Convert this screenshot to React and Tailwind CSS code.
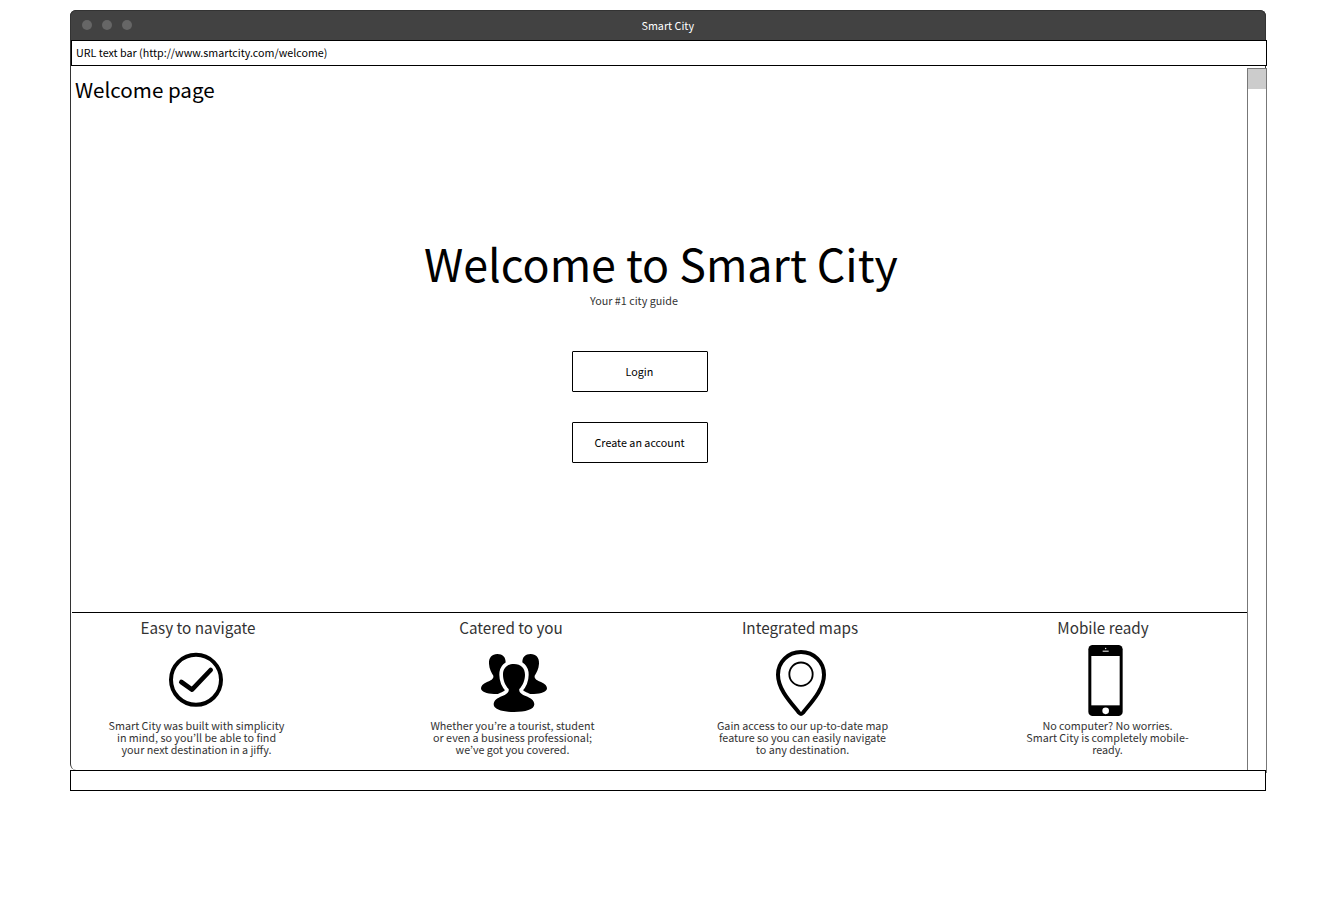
import React from "react";

function CheckIcon() {
  return (
    <svg className="h-[72px] w-[80px]" viewBox="198 120 240 216" fill="none" stroke="#000">
      <circle cx="318" cy="224.5" r="75" strokeWidth="12" />
      <path d="M274 231L306 254L362 195" strokeWidth="14" strokeLinecap="round" strokeLinejoin="round" />
    </svg>
  );
}

function PeopleIcon() {
  const side =
    "M232 147C216 147 206 158 207 176C208 192 214 202 220 212C222 222 211 227 201 231C188 237 183 243 183 250C183 260 200 267 222 267L262 267L262 190L257 172C257 156 248 147 232 147Z";
  const front =
    "M282 177C261 177 249 190 249 209C249 226 256 241 266 252C268 263 258 268 247 273C231 279 221 287 221 298C221 314 248 321 282 321C316 321 343 314 343 298C343 287 333 279 317 273C306 268 296 263 298 252C308 241 315 226 315 209C315 190 303 177 282 177Z";
  return (
    <svg className="h-[72px] w-[80px]" viewBox="162 120 240 216">
      <path d={side} />
      <path d={side} transform="translate(564 0) scale(-1 1)" />
      <path d={front} fill="#000" stroke="#fff" strokeWidth="22" paintOrder="stroke" />
    </svg>
  );
}

function PinIcon() {
  return (
    <svg className="h-[72px] w-[80px]" viewBox="183 120 240 216" fill="none" stroke="#000">
      <path
        d="M303 141C264 141 234 171 234 209C234 254 274 294 297 323Q303 331 309 323C332 294 372 254 372 209C372 171 342 141 303 141Z"
        strokeWidth="12"
      />
      <circle cx="303" cy="207.5" r="35" strokeWidth="5.5" />
    </svg>
  );
}

function PhoneIcon() {
  return (
    <svg className="h-[72px] w-[80px]" viewBox="165 120 240 216">
      <rect x="235" y="120" width="103" height="213" rx="13" />
      <rect x="244" y="153" width="85" height="148" fill="#fff" />
      <circle cx="287" cy="317.5" r="10" fill="#fff" />
      <circle cx="287" cy="130.5" r="2" fill="#fff" />
      <rect x="278" y="137" width="18" height="3" fill="#fff" />
    </svg>
  );
}

const features = [
  {
    title: "Easy to navigate",
    Icon: CheckIcon,
    lines: ["Smart City was built with simplicity", "in mind, so you’ll be able to find", "your next destination in a jiffy."],
    column: "ml-[25px]",
    titlePad: "pl-[2px]",
    iconPad: "pr-[2px]",
  },
  {
    title: "Catered to you",
    Icon: PeopleIcon,
    lines: ["Whether you’re a tourist, student", "or even a business professional;", "we’ve got you covered."],
    column: "ml-[116px]",
    titlePad: "pr-[4px]",
    iconPad: "pl-[2px]",
  },
  {
    title: "Integrated maps",
    Icon: PinIcon,
    lines: ["Gain access to our up-to-date map", "feature so you can easily navigate", "to any destination."],
    column: "ml-[90px]",
    titlePad: "pr-[6px]",
    iconPad: "pr-[4px]",
  },
  {
    title: "Mobile ready",
    Icon: PhoneIcon,
    lines: ["No computer? No worries.", "Smart City is completely mobile-", "ready."],
    column: "ml-[105px]",
    titlePad: "pr-[10px]",
    iconPad: "pr-[6px]",
  },
];

function Feature({ title, Icon, lines, column, titlePad, iconPad }) {
  return (
    <article className={`flex w-[200px] shrink-0 flex-col items-stretch text-center whitespace-nowrap text-[#333] ${column}`}>
      <h3 className={`text-[15.25px] leading-[20px] ${titlePad}`}>{title}</h3>
      <div className={`mt-[8px] flex justify-center ${iconPad}`}>
        <Icon />
      </div>
      <p className="mt-[3px] pr-px leading-[12px]">
        {lines.map((line) => (
          <span key={line} className="block">
            {line}
          </span>
        ))}
      </p>
    </article>
  );
}

export default function App() {
  return (
    <div className="h-[915px] w-[1328px] overflow-hidden bg-white pt-[10px] pl-[70px] font-['Noto_Sans_CJK_KR',sans-serif] text-[10.75px] text-black">
      <div className="flex h-[760px] w-[1196px] flex-col rounded-[6px] border border-b-0 border-[#333] bg-white">
        <header className="-mx-px -mt-px flex h-[30px] shrink-0 items-center rounded-t-[6px] border border-b-0 border-[#333] bg-[#424242] pl-[10.5px]">
          <div className="flex w-[200px] gap-[10px]">
            <span className="-mt-px size-[10px] rounded-full bg-[#666]" />
            <span className="-mt-px size-[10px] rounded-full bg-[#666]" />
            <span className="-mt-px size-[10px] rounded-full bg-[#666]" />
          </div>
          <div className="flex-1 pr-[211px] text-center leading-[16px] text-white">Smart City</div>
        </header>
        <div className="-mr-[2px] flex h-[26px] shrink-0 items-center border border-black bg-white pb-px pl-[4px] text-[10.73px] leading-[15px]">
          URL text bar (http://www.smartcity.com/welcome)
        </div>
        <div className="-mr-[2px] flex min-h-0 flex-1">
          <main className="flex w-[1176px] shrink-0 flex-col">
            <h1 className="mt-[8px] pl-[4px] text-[20.6px] leading-[30px]">Welcome page</h1>
            <section className="mt-[129px] flex h-[379px] shrink-0 flex-col">
              <h2 className="ml-[353px] text-[44.75px] leading-[60px] whitespace-nowrap">Welcome to Smart City</h2>
              <p className="mt-[2px] ml-[519px] leading-[12px] text-[#333]">Your #1 city guide</p>
              <div className="mt-[44px] ml-[501px] flex flex-col gap-[30px]">
                <button className="h-[41px] w-[136px] rounded-[1px] border border-black bg-white pt-[2px] pr-px">Login</button>
                <button className="h-[41px] w-[136px] rounded-[1px] border border-black bg-white pt-[2px] pr-px">Create an account</button>
              </div>
            </section>
            <section className="ml-px flex flex-1 border-t border-black pt-[4px]">
              {features.map((feature) => (
                <Feature key={feature.title} {...feature} />
              ))}
            </section>
          </main>
          <div className="mt-[2px] h-[705px] w-[20px] shrink-0 border border-[#777] bg-white">
            <div className="h-[20px] bg-[#ccc]" />
          </div>
        </div>
      </div>
      <footer className="relative h-[21px] w-[1196px] border border-black bg-white" />
    </div>
  );
}
